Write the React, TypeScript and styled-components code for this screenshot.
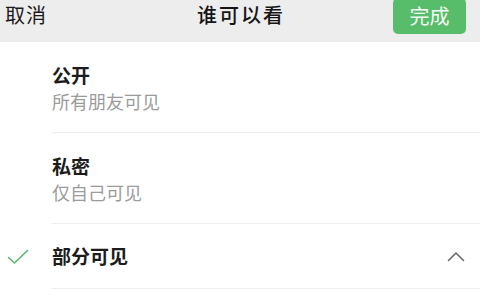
import { createGlobalStyle } from "styled-components";
import styled from "styled-components";

type OptionType = {
  title: string;
  desc?: string;
  checked?: boolean;
  expandable?: boolean;
};

const options: OptionType[] = [
  { title: "公开", desc: "所有朋友可见" },
  { title: "私密", desc: "仅自己可见" },
  { title: "部分可见", checked: true, expandable: true },
];

const CheckIcon = () => (
  <svg width="22" height="16" viewBox="0 0 22 16" fill="none">
    <path
      d="M1.5 8.5 L7.5 14 L20.5 1.5"
      stroke="#57b86c"
      strokeWidth="1.6"
      strokeLinecap="round"
      strokeLinejoin="round"
    />
  </svg>
);

const ChevronUp = () => (
  <svg width="18" height="11" viewBox="0 0 18 11" fill="none">
    <path
      d="M1.5 9.5 L9 2 L16.5 9.5"
      stroke="#6a6a6a"
      strokeWidth="1.6"
      strokeLinecap="round"
      strokeLinejoin="round"
    />
  </svg>
);

const App = () => {
  return (
    <>
      <GlobalStyle />
      <Page>
        <Header>
          <CancelText>取消</CancelText>
          <HeaderTitle>谁可以看</HeaderTitle>
          <DoneButtonWrap>
            <DoneButton>完成</DoneButton>
          </DoneButtonWrap>
        </Header>
        <List>
          {options.map((option) => (
            <Row key={option.title}>
              <Gutter>{option.checked && <CheckIcon />}</Gutter>
              <RowBody hasDesc={!!option.desc}>
                <TextBlock>
                  <RowTitle>{option.title}</RowTitle>
                  {option.desc && <RowDesc>{option.desc}</RowDesc>}
                </TextBlock>
                {option.expandable && (
                  <Trailing>
                    <ChevronUp />
                  </Trailing>
                )}
              </RowBody>
            </Row>
          ))}
        </List>
      </Page>
    </>
  );
};

const GlobalStyle = createGlobalStyle`
  html, body {
    margin: 0;
    padding: 0;
    background: #ffffff;
  }
  body {
    font-family: "Noto Sans CJK SC", "Noto Sans", sans-serif;
    color: #191919;
  }
`;

const Page = styled.div`
  width: 480px;
  height: 300px;
  overflow: hidden;
  background: #ffffff;
`;

const Header = styled.div`
  display: grid;
  grid-template-columns: 1fr auto 1fr;
  align-items: start;
  height: 42px;
  background: #ededed;
`;

const CancelText = styled.span`
  padding-left: 5px;
  font-size: 20px;
  line-height: 30px;
  letter-spacing: 1px;
  color: #1a1a1a;
`;

const HeaderTitle = styled.span`
  font-size: 20px;
  line-height: 29px;
  font-weight: 500;
  color: #151515;
  letter-spacing: 2px;
  margin-right: -2px;
`;

const DoneButtonWrap = styled.div`
  display: flex;
  justify-content: flex-end;
  padding-right: 14px;
`;

const DoneButton = styled.button`
  width: 73px;
  height: 36px;
  margin-top: -2px;
  border: none;
  border-radius: 5px;
  background: #58bd6b;
  color: #f4fbf5;
  font-family: inherit;
  font-size: 20px;
  line-height: 36px;
  padding: 0;
`;

const List = styled.div`
  display: flex;
  flex-direction: column;
`;

const Row = styled.div`
  display: flex;
  align-items: stretch;
`;

const Gutter = styled.div`
  flex: 0 0 52px;
  display: flex;
  align-items: center;
  padding-left: 7px;
  box-sizing: border-box;
`;

const RowBody = styled.div<{ hasDesc: boolean }>`
  flex: 1;
  display: flex;
  align-items: center;
  justify-content: space-between;
  box-sizing: border-box;
  height: ${({ hasDesc }) => (hasDesc ? "91px" : "65px")};
  padding: ${({ hasDesc }) => (hasDesc ? "20px 0 19px" : "0")};
  border-bottom: 1px solid #efefef;
`;

const TextBlock = styled.div`
  display: flex;
  flex-direction: column;
`;

const RowTitle = styled.span`
  font-size: 19px;
  line-height: 26px;
  font-weight: 700;
  color: #1c1c1c;
`;

const RowDesc = styled.span`
  font-size: 18px;
  line-height: 26px;
  color: #9b9b9b;
`;

const Trailing = styled.div`
  display: flex;
  align-items: center;
  padding-right: 15px;
`;

export default App;
